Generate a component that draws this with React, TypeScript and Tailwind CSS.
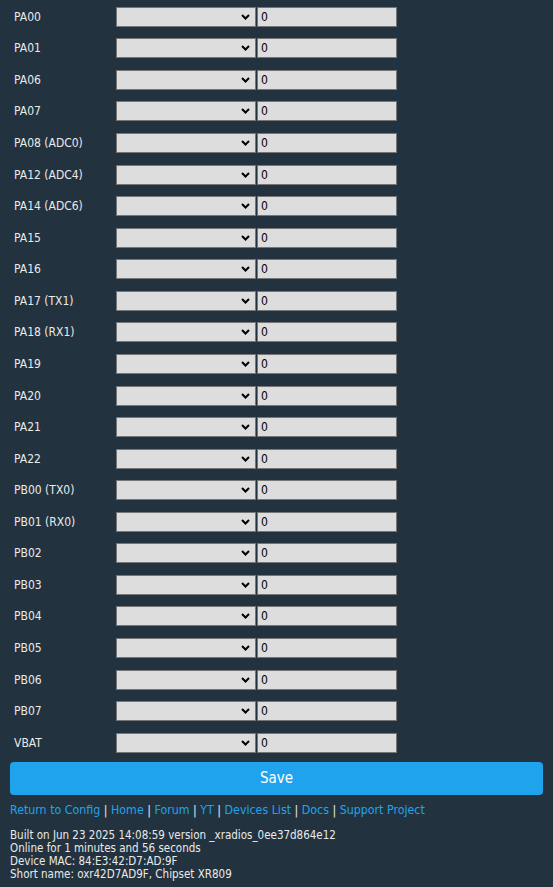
import React from "react";

const pins = [
  "PA00",
  "PA01",
  "PA06",
  "PA07",
  "PA08 (ADC0)",
  "PA12 (ADC4)",
  "PA14 (ADC6)",
  "PA15",
  "PA16",
  "PA17 (TX1)",
  "PA18 (RX1)",
  "PA19",
  "PA20",
  "PA21",
  "PA22",
  "PB00 (TX0)",
  "PB01 (RX0)",
  "PB02",
  "PB03",
  "PB04",
  "PB05",
  "PB06",
  "PB07",
  "VBAT",
];

const links = [
  "Return to Config",
  "Home",
  "Forum",
  "YT",
  "Devices List",
  "Docs",
  "Support Project",
];

function PinRow({ name }: { name: string }) {
  return (
    <div className="flex h-[31.57px] items-center">
      <span className="w-[116px] pl-[14px] text-[12px] text-[#eaeaea]">{name}</span>
      <div className="relative h-[20px] w-[140px]">
        <select className="h-full w-full appearance-none border border-[#767676] bg-[#dddddd] outline-none">
          <option value=""></option>
        </select>
        <svg
          className="pointer-events-none absolute right-[6px] top-[7px]"
          width="9"
          height="6"
          viewBox="0 0 9 6"
        >
          <path d="M1 1l3.5 3.5L8 1" fill="none" stroke="#000" strokeWidth="2" />
        </svg>
      </div>
      <input
        defaultValue="0"
        className="ml-[1px] h-[20px] w-[140px] border border-[#767676] bg-[#dddddd] px-[3px] text-[12px] text-black outline-none"
      />
    </div>
  );
}

export default function App() {
  return (
    <div
      className="min-h-[887px] bg-[#22333f] pt-[1px]"
      style={{ fontFamily: "'DejaVu Sans Condensed', 'DejaVu Sans', sans-serif" }}
    >
      <div className="flex flex-col">
        {pins.map((p) => (
          <PinRow key={p} name={p} />
        ))}
      </div>
      <div className="px-[10px]">
        <button
          type="button"
          className="mt-[3px] h-[33px] w-full rounded-[4px] bg-[#1fa3ec] text-[15px] text-white"
        >
          Save
        </button>
        <div className="mt-[8px] text-[12.3px] leading-[15px] text-[#eaeaea]">
          {links.map((l, i) => (
            <React.Fragment key={l}>
              {i > 0 && " | "}
              <a className="text-[#1fa3ec]">{l}</a>
            </React.Fragment>
          ))}
        </div>
        <div className="mt-[11px] text-[11.5px] leading-[13px] text-[#eaeaea]">
          <div>Built on Jun 23 2025 14:08:59 version _xradios_0ee37d864e12</div>
          <div>Online for 1 minutes and 56 seconds</div>
          <div>Device MAC: 84:E3:42:D7:AD:9F</div>
          <div>Short name: oxr42D7AD9F, Chipset XR809</div>
        </div>
      </div>
    </div>
  );
}
